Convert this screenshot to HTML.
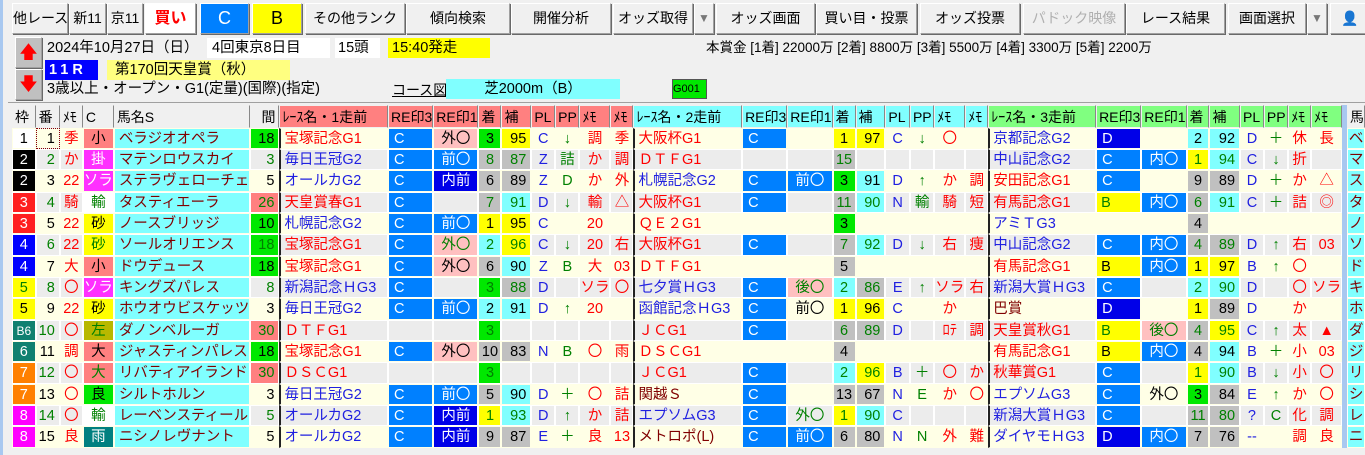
<!DOCTYPE html>
<html><head><meta charset="utf-8">
<style>
*{margin:0;padding:0;box-sizing:border-box}
body{width:1365px;height:455px;background:#f0f0f0;font-family:"Liberation Sans","Noto Sans CJK JP",sans-serif;position:relative;overflow:hidden;color:#000}
.bt{position:absolute;top:3px;height:31px;background:#f0f0f0;border:1px solid #a0a0a0;border-top-color:#fff;border-left-color:#fff;box-shadow:1px 1px 0 #696969;font-size:14px;line-height:29px;text-align:center;white-space:nowrap}
.ab{position:absolute;font-size:14.5px;line-height:20px;white-space:nowrap}
table{position:absolute;left:12px;top:105px;border-collapse:separate;border-spacing:0;table-layout:fixed;font-size:14.5px}
td{border:1px solid #fff;background-clip:padding-box;padding:0;text-align:center;white-space:nowrap;overflow:hidden;line-height:18px}
tr.h td{height:23px;background:#f0f0f0;border-color:#f0f0f0;border-right:1px solid #888;text-align:left;padding-left:2px;font-size:14px}
tr.h td.hs{background:#ff8080}tr.h td.hc{background:#80ffff}tr.h td.hg{background:#80ff80}
tr{height:21px}tr.t{height:22px}
tr.o td{background-color:#ffffe6;border-color:#ffffe6}
tr.e td{background-color:#ececec;border-color:#fff}
tr td.nm{background-color:#80ffff;color:#800000;text-align:left;padding-left:4px}
tr td.bh{background-color:#80ffff;color:#800000;text-align:left;padding-left:1px}
tr td.gp{background-color:#a8c8f0;border-color:#a8c8f0}
td.rn{border-left:2px solid #222 !important;text-align:left;padding-left:3px}
td.l{text-align:left;padding-left:4px}td.ri{text-align:right;padding-right:4px}
tr td.g{background-color:#00e800}tr td.s{background-color:#ff8080}tr td.y{background-color:#ffff00}tr td.c{background-color:#80ffff}
tr td.k{background-color:#c0c0c0}tr td.b{background-color:#0080ff;color:#fff;text-align:left;padding-left:5px}
tr td.d{background-color:#0000e8;color:#fff;text-align:left;padding-left:5px}tr td.p{background-color:#ffc0c0}
tr td.bb{background-color:#0080ff;color:#fff}tr td.dd{background-color:#0000e8;color:#fff}
tr td.m{background-color:#ff30ff;color:#fff}tr td.w{background-color:#fff}tr td.ol{background-color:#b8b800}tr td.tl{background-color:#008080;color:#fff}
tr td.wk{background-color:#fff;color:#000}tr td.bk{background-color:#000;color:#fff}tr td.rd{background-color:#ff2020;color:#fff}tr td.bl{background-color:#0000ff;color:#fff}
tr td.yw{background-color:#ffff00}tr td.gr{background-color:#108070;color:#fff}tr td.or{background-color:#ff8000;color:#fff}tr td.mg{background-color:#ff00ff;color:#fff}
.r{color:#ff0000}.u{color:#2020e0}.n{color:#800000}.e{color:#008000}
</style></head><body>
<div style="position:absolute;left:0;top:0;width:3px;height:455px;background:#a8c8f0"></div>
<div class="bt" style="left:12px;width:56px">他レース</div>
<div class="bt" style="left:69px;width:37px">新11</div>
<div class="bt" style="left:107px;width:36px">京11</div>
<div class="bt" style="left:145px;width:51px;background:#fff;color:#f00;font-weight:bold;font-size:16px">買い</div>
<div class="bt" style="left:200px;width:49px;background:#0080ff;color:#fff;font-size:18px">C</div>
<div class="bt" style="left:252px;width:50px;background:#ffff00;font-size:18px">B</div>
<div class="bt" style="left:305px;width:100px">その他ランク</div>
<div class="bt" style="left:406px;width:104px">傾向検索</div>
<div class="bt" style="left:511px;width:100px">開催分析</div>
<div class="bt" style="left:613px;width:80px">オッズ取得</div>
<div class="bt" style="left:694px;width:20px;color:#777;font-size:12px">▼</div>
<div class="bt" style="left:716px;width:99px">オッズ画面</div>
<div class="bt" style="left:816px;width:101px">買い目・投票</div>
<div class="bt" style="left:920px;width:100px">オッズ投票</div>
<div class="bt" style="left:1023px;width:102px;color:#b0b0b0">パドック映像</div>
<div class="bt" style="left:1126px;width:99px">レース結果</div>
<div class="bt" style="left:1228px;width:78px">画面選択</div>
<div class="bt" style="left:1307px;width:20px;color:#777;font-size:12px">▼</div>
<div class="bt" style="left:1330px;width:40px;text-align:left;padding-left:10px;font-size:14px">👤</div>

<div class="bt" style="left:15px;top:37px;width:27px;height:31px;background:#c0c0c0;color:#f00;font-size:18px">🡅</div>
<div class="bt" style="left:15px;top:69px;width:27px;height:31px;background:#c0c0c0;color:#f00;font-size:18px">🡇</div>
<div class="ab" style="left:47px;top:38px">2024年10月27日（日）</div>
<div class="ab" style="left:207px;top:38px;width:123px;background:#fff;padding-left:5px">4回東京8日目</div>
<div class="ab" style="left:335px;top:38px;width:45px;background:#fff;padding-left:3px">15頭</div>
<div class="ab" style="left:388px;top:38px;width:102px;background:#ffff00;padding-left:4px">15:40発走</div>
<div class="ab" style="left:706px;top:38px;font-size:13.5px">本賞金 [1着] 22000万 [2着] 8800万 [3着] 5500万 [4着] 3300万 [5着] 2200万</div>
<div class="ab" style="left:45px;top:60px;width:53px;background:#0000ff;color:#fff;padding-left:4px;letter-spacing:4px;font-weight:bold">11R</div>
<div class="ab" style="left:107px;top:60px;width:183px;background:#ffff80;padding-left:8px">第170回天皇賞（秋）</div>
<div class="ab" style="left:47px;top:79px">3歳以上・オープン・G1(定量)(国際)(指定)</div>
<div class="ab" style="left:392px;top:80px;text-decoration:underline;font-size:14px">コース図</div>
<div class="ab" style="left:446px;top:79px;width:174px;background:#80ffff;text-align:center">芝2000m（B）</div>
<div class="ab" style="left:672px;top:79px;width:35px;background:#00e800;font-size:11px;border:1px solid #555;line-height:18px">G001</div>
<div style="position:absolute;left:8px;top:102px;width:1357px;height:1px;background:#a0a0a0"></div>

<table>
<colgroup><col style="width:26px"><col style="width:25px"><col style="width:25px"><col style="width:25px"><col style="width:132px"><col style="width:32px"><col style="width:113px"><col style="width:42px"><col style="width:44px"><col style="width:25px"><col style="width:33px"><col style="width:25px"><col style="width:25px"><col style="width:25px"><col style="width:25px"><col style="width:113px"><col style="width:42px"><col style="width:43px"><col style="width:25px"><col style="width:33px"><col style="width:26px"><col style="width:25px"><col style="width:25px"><col style="width:25px"><col style="width:112px"><col style="width:42px"><col style="width:43px"><col style="width:25px"><col style="width:34px"><col style="width:25px"><col style="width:25px"><col style="width:25px"><col style="width:25px"><col style="width:5px"><col style="width:13px"></colgroup>
<tr class="h"><td>枠</td><td>番</td><td>ﾒﾓ</td><td>C</td><td>馬名S</td><td style="text-align:right;padding-right:3px">間</td><td class="hs">ﾚｰｽ名・1走前</td><td class="hs">RE印3</td><td class="hs">RE印1</td><td class="hs">着</td><td class="hs">補</td><td class="hs">PL</td><td class="hs">PP</td><td class="hs">ﾒﾓ</td><td class="hs">ﾒﾓ</td><td class="hc">ﾚｰｽ名・2走前</td><td class="hc">RE印3</td><td class="hc">RE印1</td><td class="hc">着</td><td class="hc">補</td><td class="hc">PL</td><td class="hc">PP</td><td class="hc">ﾒﾓ</td><td class="hc">ﾒﾓ</td><td class="hg">ﾚｰｽ名・3走前</td><td class="hg">RE印3</td><td class="hg">RE印1</td><td class="hg">着</td><td class="hg">補</td><td class="hg">PL</td><td class="hg">PP</td><td class="hg">ﾒﾓ</td><td class="hg">ﾒﾓ</td><td style="background:#a8c8f0;border-color:#a8c8f0"></td><td>馬</td></tr>

<tr class="o"><td class="wk">1</td><td class="ri" style="border:1px dotted #800">1</td><td class="r">季</td><td class="s">小</td><td class="nm">ベラジオオペラ</td><td class="g ri">18</td><td class="rn r">宝塚記念G1</td><td class="b">C</td><td class="p">外〇</td><td class="g">3</td><td class="y ri">95</td><td class="u">C</td><td class="e">↓</td><td class="r">調</td><td class="r">季</td><td class="rn r">大阪杯G1</td><td class="b">C</td><td></td><td class="y">1</td><td class="y ri">97</td><td class="u">C</td><td class="e">↓</td><td class="r">〇</td><td></td><td class="rn u">京都記念G2</td><td class="d">D</td><td></td><td class="c">2</td><td class="c ri">92</td><td class="u">D</td><td class="e">＋</td><td class="r">休</td><td class="r">長</td><td class="gp"></td><td class="bh">ベ</td></tr>

<tr class="e"><td class="bk">2</td><td class="ri">2</td><td class="r">か</td><td class="m">掛</td><td class="nm">マテンロウスカイ</td><td class="ri">3</td><td class="rn u">毎日王冠G2</td><td class="b">C</td><td class="bb">前〇</td><td class="k">8</td><td class="k ri">87</td><td class="u">Z</td><td class="e">詰</td><td class="r">か</td><td class="r">調</td><td class="rn r">ＤＴＦG1</td><td></td><td></td><td class="k">15</td><td></td><td></td><td></td><td></td><td></td><td class="rn u">中山記念G2</td><td class="b">C</td><td class="bb">内〇</td><td class="y">1</td><td class="c ri">94</td><td class="u">C</td><td class="e">↓</td><td class="r">折</td><td></td><td class="gp"></td><td class="bh">マ</td></tr>

<tr class="o t"><td class="bk">2</td><td class="ri">3</td><td class="r">22</td><td class="m">ソラ</td><td class="nm">ステラヴェローチェ</td><td class="ri">5</td><td class="rn u">オールカG2</td><td class="b">C</td><td class="dd">内前</td><td class="k">6</td><td class="k ri">89</td><td class="u">Z</td><td class="e">D</td><td class="r">か</td><td class="r">外</td><td class="rn u">札幌記念G2</td><td class="b">C</td><td class="bb">前〇</td><td class="g">3</td><td class="c ri">91</td><td class="u">D</td><td class="e">↑</td><td class="r">か</td><td class="r">調</td><td class="rn r">安田記念G1</td><td class="b">C</td><td></td><td class="k">9</td><td class="k ri">89</td><td class="u">D</td><td class="e">＋</td><td class="r">か</td><td class="r">△</td><td class="gp"></td><td class="bh">ス</td></tr>

<tr class="e"><td class="rd">3</td><td class="ri">4</td><td class="r">騎</td><td class="w">輸</td><td class="nm">タスティエーラ</td><td class="s ri">26</td><td class="rn r">天皇賞春G1</td><td class="b">C</td><td></td><td class="k">7</td><td class="c ri">91</td><td class="u">D</td><td class="e">↓</td><td class="r">輸</td><td class="r">△</td><td class="rn r">大阪杯G1</td><td class="b">C</td><td></td><td class="k">11</td><td class="c ri">90</td><td class="u">N</td><td class="e">輸</td><td class="r">騎</td><td class="r">短</td><td class="rn r">有馬記念G1</td><td class="y l">B</td><td class="bb">内〇</td><td class="k">6</td><td class="c ri">91</td><td class="u">C</td><td class="e">＋</td><td class="r">詰</td><td class="r">◎</td><td class="gp"></td><td class="bh">タ</td></tr>

<tr class="o"><td class="rd">3</td><td class="ri">5</td><td class="r">22</td><td class="y">砂</td><td class="nm">ノースブリッジ</td><td class="g ri">10</td><td class="rn u">札幌記念G2</td><td class="b">C</td><td class="bb">前〇</td><td class="y">1</td><td class="y ri">95</td><td class="u">C</td><td></td><td class="r">20</td><td></td><td class="rn r">ＱＥ２G1</td><td></td><td></td><td class="g">3</td><td></td><td></td><td></td><td></td><td></td><td class="rn u">アミＴG3</td><td></td><td></td><td class="k">4</td><td></td><td></td><td></td><td></td><td></td><td class="gp"></td><td class="bh">ノ</td></tr>

<tr class="e t"><td class="bl">4</td><td class="ri">6</td><td class="r">22</td><td class="y">砂</td><td class="nm">ソールオリエンス</td><td class="g ri">18</td><td class="rn r">宝塚記念G1</td><td class="b">C</td><td class="p">外〇</td><td class="c">2</td><td class="y ri">96</td><td class="u">C</td><td class="e">↓</td><td class="r">20</td><td class="r">右</td><td class="rn r">大阪杯G1</td><td class="b">C</td><td></td><td class="k">7</td><td class="c ri">92</td><td class="u">D</td><td class="e">↓</td><td class="r">右</td><td class="r">痩</td><td class="rn u">中山記念G2</td><td class="b">C</td><td class="bb">内〇</td><td class="k">4</td><td class="k ri">89</td><td class="u">D</td><td class="e">↑</td><td class="r">右</td><td class="r">03</td><td class="gp"></td><td class="bh">ソ</td></tr>

<tr class="o"><td class="bl">4</td><td class="ri">7</td><td class="r">大</td><td class="s">小</td><td class="nm">ドウデュース</td><td class="g ri">18</td><td class="rn r">宝塚記念G1</td><td class="b">C</td><td class="p">外〇</td><td class="k">6</td><td class="c ri">90</td><td class="u">Z</td><td class="e">B</td><td class="r">大</td><td class="r">03</td><td class="rn r">ＤＴＦG1</td><td></td><td></td><td class="k">5</td><td></td><td></td><td></td><td></td><td></td><td class="rn r">有馬記念G1</td><td class="y l">B</td><td class="bb">内〇</td><td class="y">1</td><td class="y ri">97</td><td class="u">B</td><td class="e">↑</td><td class="r">〇</td><td></td><td class="gp"></td><td class="bh">ド</td></tr>

<tr class="e"><td class="yw">5</td><td class="ri">8</td><td class="r">〇</td><td class="m">ソラ</td><td class="nm">キングズパレス</td><td class="ri">8</td><td class="rn u">新潟記念ＨG3</td><td class="b">C</td><td></td><td class="g">3</td><td class="k ri">88</td><td class="u">D</td><td></td><td class="r">ソラ</td><td class="r">〇</td><td class="rn u">七夕賞ＨG3</td><td class="b">C</td><td class="p">後〇</td><td class="c">2</td><td class="k ri">86</td><td class="u">E</td><td class="e">↑</td><td class="r">ソラ</td><td class="r">右</td><td class="rn u">新潟大賞ＨG3</td><td class="b">C</td><td></td><td class="c">2</td><td class="c ri">90</td><td class="u">D</td><td></td><td class="r">〇</td><td class="r">ソラ</td><td class="gp"></td><td class="bh">キ</td></tr>

<tr class="o t"><td class="yw">5</td><td class="ri">9</td><td class="r">22</td><td class="y">砂</td><td class="nm">ホウオウビスケッツ</td><td class="ri">3</td><td class="rn u">毎日王冠G2</td><td class="b">C</td><td class="bb">前〇</td><td class="c">2</td><td class="c ri">91</td><td class="u">D</td><td class="e">↑</td><td class="r">20</td><td></td><td class="rn u">函館記念ＨG3</td><td class="b">C</td><td>前〇</td><td class="y">1</td><td class="y ri">96</td><td class="u">C</td><td></td><td class="r">か</td><td></td><td class="rn n">巴賞</td><td class="d">D</td><td></td><td class="y">1</td><td class="k ri">89</td><td class="u">D</td><td></td><td class="r">か</td><td></td><td class="gp"></td><td class="bh">ホ</td></tr>

<tr class="e"><td class="gr" style="font-size:12px">B6</td><td class="ri">10</td><td class="r">〇</td><td class="ol">左</td><td class="nm">ダノンベルーガ</td><td class="s ri">30</td><td class="rn r">ＤＴＦG1</td><td></td><td></td><td class="g">3</td><td></td><td></td><td></td><td></td><td></td><td class="rn r">ＪＣG1</td><td class="b">C</td><td></td><td class="k">6</td><td class="k ri">89</td><td class="u">D</td><td></td><td class="r">ﾛﾃ</td><td class="r">調</td><td class="rn r">天皇賞秋G1</td><td class="y l">B</td><td class="p">後〇</td><td class="k">4</td><td class="y ri">95</td><td class="u">C</td><td class="e">↑</td><td class="r">太</td><td class="r">▲</td><td class="gp"></td><td class="bh">ダ</td></tr>

<tr class="o"><td class="gr">6</td><td class="ri">11</td><td class="r">調</td><td class="s">大</td><td class="nm">ジャスティンパレス</td><td class="g ri">18</td><td class="rn r">宝塚記念G1</td><td class="b">C</td><td class="p">外〇</td><td class="k">10</td><td class="k ri">83</td><td class="u">N</td><td class="e">B</td><td class="r">〇</td><td class="r">雨</td><td class="rn r">ＤＳＣG1</td><td></td><td></td><td class="k">4</td><td></td><td></td><td></td><td></td><td></td><td class="rn r">有馬記念G1</td><td class="y l">B</td><td class="bb">内〇</td><td class="k">4</td><td class="c ri">94</td><td class="u">B</td><td class="e">＋</td><td class="r">小</td><td class="r">03</td><td class="gp"></td><td class="bh">ジ</td></tr>

<tr class="e t"><td class="or">7</td><td class="ri">12</td><td class="r">〇</td><td class="s">大</td><td class="nm">リバティアイランド</td><td class="s ri">30</td><td class="rn r">ＤＳＣG1</td><td></td><td></td><td class="g">3</td><td></td><td></td><td></td><td></td><td></td><td class="rn r">ＪＣG1</td><td class="b">C</td><td></td><td class="c">2</td><td class="y ri">96</td><td class="u">B</td><td class="e">＋</td><td class="r">〇</td><td class="r">か</td><td class="rn r">秋華賞G1</td><td class="b">C</td><td></td><td class="y">1</td><td class="c ri">90</td><td class="u">B</td><td class="e">↓</td><td class="r">小</td><td class="r">〇</td><td class="gp"></td><td class="bh">リ</td></tr>

<tr class="o"><td class="or">7</td><td class="ri">13</td><td class="r">〇</td><td class="g">良</td><td class="nm">シルトホルン</td><td class="ri">3</td><td class="rn u">毎日王冠G2</td><td class="b">C</td><td class="bb">前〇</td><td class="k">5</td><td class="c ri">90</td><td class="u">D</td><td class="e">＋</td><td class="r">〇</td><td class="r">詰</td><td class="rn n">関越Ｓ</td><td class="b">C</td><td></td><td class="k">13</td><td class="k ri">67</td><td class="u">N</td><td class="e">E</td><td class="r">か</td><td class="r">〇</td><td class="rn u">エプソムG3</td><td class="b">C</td><td>外〇</td><td class="g">3</td><td class="k ri">84</td><td class="u">E</td><td class="e">↑</td><td class="r">か</td><td class="r">〇</td><td class="gp"></td><td class="bh">シ</td></tr>

<tr class="e"><td class="mg">8</td><td class="ri">14</td><td class="r">〇</td><td class="w">輸</td><td class="nm">レーベンスティール</td><td class="ri">5</td><td class="rn u">オールカG2</td><td class="b">C</td><td class="dd">内前</td><td class="y">1</td><td class="c ri">93</td><td class="u">D</td><td class="e">↑</td><td class="r">か</td><td class="r">詰</td><td class="rn u">エプソムG3</td><td class="b">C</td><td>外〇</td><td class="y">1</td><td class="c ri">90</td><td class="u">C</td><td></td><td></td><td></td><td class="rn u">新潟大賞ＨG3</td><td class="b">C</td><td></td><td class="k">11</td><td class="k ri">80</td><td class="u">?</td><td class="e">C</td><td class="r">化</td><td class="r">調</td><td class="gp"></td><td class="bh">レ</td></tr>

<tr class="o t"><td class="mg">8</td><td class="ri">15</td><td class="r">良</td><td class="tl">雨</td><td class="nm">ニシノレヴナント</td><td class="ri">5</td><td class="rn u">オールカG2</td><td class="b">C</td><td class="dd">内前</td><td class="k">9</td><td class="k ri">87</td><td class="u">E</td><td class="e">＋</td><td class="r">良</td><td class="r">13</td><td class="rn n">メトロポ(L)</td><td class="b">C</td><td class="bb">前〇</td><td class="k">6</td><td class="k ri">80</td><td class="u">N</td><td class="e">N</td><td class="r">外</td><td class="r">難</td><td class="rn u">ダイヤモＨG3</td><td class="d">D</td><td class="bb">内〇</td><td class="k">7</td><td class="k ri">76</td><td class="u">--</td><td></td><td class="r">調</td><td class="r">良</td><td class="gp"></td><td class="bh">ニ</td></tr>
</table>
</body></html>
